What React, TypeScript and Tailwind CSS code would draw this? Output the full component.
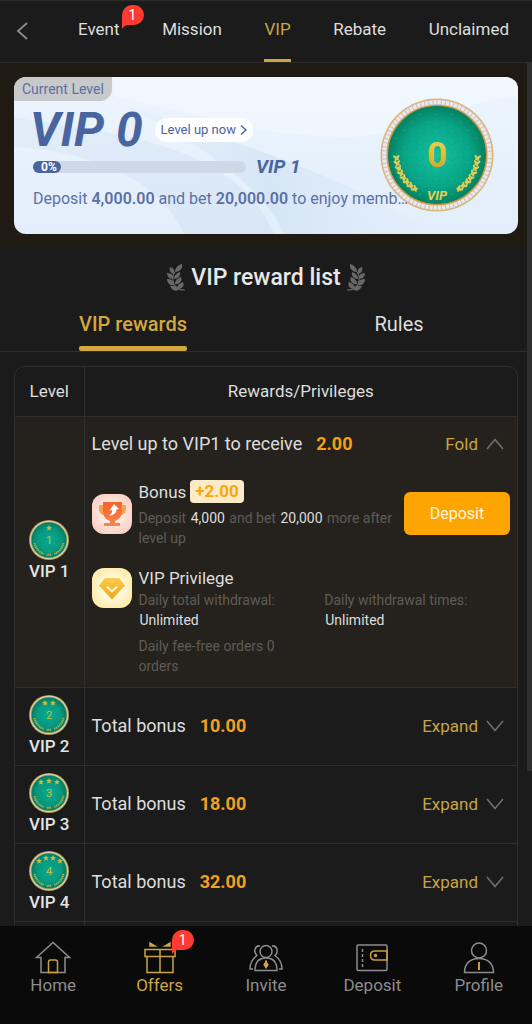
import clsx from "clsx";
import { ReactNode } from "react";

const tabs = ["Event", "Mission", "VIP", "Rebate", "Unclaimed"];

const levels = [
  { level: 2, bonus: "10.00" },
  { level: 3, bonus: "18.00" },
  { level: 4, bonus: "32.00" },
];

const stars: Record<number, [number, number][]> = {
  1: [[20, 8]],
  2: [[16, 8], [24, 8]],
  3: [[12, 9], [20, 8], [28, 9]],
  4: [[10, 10], [17, 7], [24, 7], [31, 10]],
};

function Bubble({ children }: { children: ReactNode }) {
  return (
    <span className="absolute left-full bottom-full h-5 w-[22px] text-center text-sm leading-5 text-white">
      <svg viewBox="0 0 22 24" className="absolute left-0 top-0 h-6 w-[22px]" fill="#fd3b30">
        <path d="M10 0h2a10 10 0 0 1 0 20H5q-3 1-5 4V10A10 10 0 0 1 10 0Z" />
      </svg>
      <span className="relative">{children}</span>
    </span>
  );
}

function Chevron({ up }: { up?: boolean }) {
  return (
    <svg
      viewBox="0 0 18 12"
      className="h-3 w-[18px]"
      fill="none"
      stroke="#6f6f6f"
      strokeWidth="1.6"
    >
      <path d={up ? "M1 11 9 1.5 17 11" : "M1 1 9 10.5 17 1"} />
    </svg>
  );
}

function Medal({ level }: { level: number }) {
  return (
    <svg viewBox="0 0 40 40" className="mx-auto block size-10">
      <defs>
        <radialGradient id={`medal-${level}`}>
          <stop offset="0" stopColor="#08ab91" />
          <stop offset="0.65" stopColor="#07997f" />
          <stop offset="1" stopColor="#057a60" />
        </radialGradient>
      </defs>
      <circle cx="20" cy="20" r="20" fill="#b58f45" />
      <circle cx="20" cy="20" r="19.2" fill="#d8d4bd" />
      <circle cx="20" cy="20" r="17.8" fill={`url(#medal-${level})`} stroke="#8b9a56" strokeWidth="0.6" />
      {stars[level].map(([x, y]) => (
        <path
          key={x}
          transform={`translate(${x} ${y})`}
          d="M0-3 .9-.9 3-.8 1.3.6 1.9 2.8 0 1.5-1.9 2.8-1.3.6-3-.8-.9-.9Z"
          fill="#c9bd4c"
        />
      ))}
      <text x="20" y="23.5" textAnchor="middle" fontSize="11" fontFamily="Roboto, sans-serif" fill="#c3bf3c">
        {level}
      </text>
      <path
        d="M5.5 23A15 15 0 0 0 15 34M34.5 23A15 15 0 0 1 25 34"
        fill="none"
        stroke="#a8b350"
        strokeWidth="2"
        strokeDasharray="1.3 0.6"
      />
      <path d="M17.5 34.8h5" stroke="#a8b350" strokeWidth="2" strokeDasharray="1.2 0.5" />
    </svg>
  );
}

function BigMedal() {
  const leaves = [0, 1, 2, 3, 4, 5, 6, 7];
  const branch = (
    <g fill="#dccb5a">
      {leaves.map((i) => {
        const a = ((172 - i * 7.5) * Math.PI) / 180;
        const x = 57 + 41 * Math.cos(a);
        const y = 57 + 41 * Math.sin(a);
        return (
          <g key={i} transform={`translate(${x} ${y}) rotate(${-i * 7})`}>
            <ellipse cx="-2.2" cy="-2" rx="3.6" ry="1.3" transform="rotate(38)" />
            <ellipse cx="2.6" cy="-1" rx="3.6" ry="1.3" transform="rotate(-55)" />
          </g>
        );
      })}
    </g>
  );
  return (
    <svg viewBox="0 0 114 114" className="absolute right-6 top-[21px] size-[114px]">
      <defs>
        <radialGradient id="emerald">
          <stop offset="0" stopColor="#14c0a2" />
          <stop offset="0.65" stopColor="#08a688" />
          <stop offset="1" stopColor="#04805f" />
        </radialGradient>
        <linearGradient id="gold" x1="0" y1="0" x2="0" y2="1">
          <stop offset="0" stopColor="#f1d84e" />
          <stop offset="1" stopColor="#d39c1c" />
        </linearGradient>
        <pattern id="quilt" width="16" height="16" patternUnits="userSpaceOnUse">
          <path d="M0 8 8 0 16 8 8 16Z" fill="none" stroke="#0b8a72" strokeOpacity="0.25" />
          <circle cx="8" cy="0" r="1" fill="#5fdcc0" fillOpacity="0.35" />
          <circle cx="0" cy="8" r="1" fill="#5fdcc0" fillOpacity="0.35" />
        </pattern>
      </defs>
      <circle cx="57" cy="57" r="56.5" fill="#e0b65c" />
      <circle cx="57" cy="57" r="52.8" fill="none" stroke="#c9bcc0" strokeWidth="5.4" />
      <circle cx="57" cy="57" r="52.8" fill="none" stroke="#efe8e6" strokeWidth="4" strokeDasharray="3.2 0.95" />
      <circle cx="57" cy="57" r="49.5" fill="url(#emerald)" stroke="#c79a3d" strokeWidth="1.2" />
      <circle cx="57" cy="57" r="48" fill="url(#quilt)" />
      {branch}
      <g transform="translate(114 0) scale(-1 1)">{branch}</g>
      <text
        x="57"
        y="69"
        textAnchor="middle"
        fontFamily="Roboto, sans-serif"
        fontWeight="700"
        fontSize="35"
        fill="url(#gold)"
      >
        0
      </text>
      <text
        x="57"
        y="102"
        textAnchor="middle"
        fontFamily="Roboto, sans-serif"
        fontWeight="700"
        fontStyle="italic"
        fontSize="13"
        fill="#e6cf52"
      >
        VIP
      </text>
    </svg>
  );
}

function Laurel({ flip }: { flip?: boolean }) {
  return (
    <svg viewBox="0 0 19 28" className={clsx("h-7 w-[19px]", flip && "-scale-x-100")} fill="#676767">
      <path d="M8 8C4 13 6 20 9 23c3 3 6 3 9 3" fill="none" stroke="#676767" strokeWidth="1.2" />
      <path d="M15 0C16 4 13 8 8 8 8 4 11 1 15 0Z" />
      <path d="M3 3C7 4 8 7 7 10 3 9 2 6 3 3Z" />
      <path d="M13 8C14 12 11 15 7 15 7 11 10 9 13 8Z" />
      <path d="M0 9C5 9 7 12 6 15 2 15 0 12 0 9Z" />
      <path d="M14 13C16 17 12 21 8 20 8 16 11 14 14 13Z" />
      <path d="M0 15C5 15 7 17 7 21 3 22 0 19 0 15Z" />
      <path d="M16 18C18 22 15 25 10 25 10 21 13 19 16 18Z" />
      <path d="M3 22C7 21 10 22 12 25 10 28 5 27 3 22Z" />
    </svg>
  );
}

function TrophyIcon() {
  return (
    <svg viewBox="0 0 40 40" className="size-10 shrink-0">
      <defs>
        <radialGradient id="peach">
          <stop offset="0.4" stopColor="#fff0ea" />
          <stop offset="1" stopColor="#fdd3c7" />
        </radialGradient>
        <linearGradient id="cup" x1="0" y1="0" x2="0" y2="1">
          <stop offset="0" stopColor="#f6632e" />
          <stop offset="1" stopColor="#f98650" />
        </linearGradient>
      </defs>
      <rect width="40" height="40" rx="12" fill="url(#peach)" />
      <path d="M12 11H8q-1 0-1 1v3c0 4 3 6 7 7M28 11h5q1 0 1 1v3c0 4-3 6-7 7" fill="#fba04b" />
      <path d="M11 8h19v9c0 6-4 9-7 10v2h5v3H12v-3h6v-2c-3-1-7-4-7-10Z" fill="url(#cup)" />
      <path d="m22 10 5 5-2.500.5c0 3.500-3 6-7.500 6 2.500-1.500 3.500-3.500 3-5.500l-2.500.5Z" fill="#fff" />
    </svg>
  );
}

function DiamondIcon() {
  return (
    <svg viewBox="0 0 40 40" className="mt-0.5 size-10 shrink-0">
      <defs>
        <radialGradient id="cream">
          <stop offset="0.4" stopColor="#fffbe8" />
          <stop offset="1" stopColor="#fdedb0" />
        </radialGradient>
        <linearGradient id="gem" x1="0" y1="0" x2="0" y2="1">
          <stop offset="0" stopColor="#fbcb51" />
          <stop offset="1" stopColor="#f1a60e" />
        </linearGradient>
      </defs>
      <rect width="40" height="40" rx="12" fill="url(#cream)" />
      <path d="M13 10h14l6 7.5L20 31.5 7 17.5Z" fill="url(#gem)" />
      <path d="m15 18.5 5 5 5-5" fill="none" stroke="#fff6d8" strokeWidth="1.8" />
    </svg>
  );
}

const navItems = [
  {
    label: "Home",
    icon: (
      <>
        <path d="M1.5 16.5 18 1.5l16.5 15H30v15H6v-15Z" />
        <path d="M13.5 31.5V21q0-2 2-2h5q2 0 2 2v10.5Z" stroke="#c9a03d" />
      </>
    ),
  },
  {
    label: "Offers",
    badge: 1,
    icon: (
      <g stroke="#cba546">
        <path d="M3 8.5h30v7H3ZM5 15.5v16h26v-16M18 8.5v23" />
        <path d="M8 2v3h5ZM28 2v3h-5Z" fill="#cba546" />
      </g>
    ),
  },
  {
    label: "Invite",
    icon: (
      <>
        <circle cx="18" cy="10.5" r="6" />
        <path d="M7 29.5c0-8 4-12.5 11-12.5s11 4.5 11 12.5Z" />
        <path d="M12 5c-5-1-7 6-3 9.5-4 3-7 8-7 13.5h3M24 5c5-1 7 6 3 9.5 4 3 7 8 7 13.5h-3" />
        <path d="M18 19.5v2m0 0-1.5 2L18 26l1.5-2.5Z" stroke="#d9a93a" strokeWidth="2" />
      </>
    ),
  },
  {
    label: "Deposit",
    icon: (
      <>
        <rect x="3" y="4" width="30" height="25.5" rx="1" />
        <path d="M8.5 8v18" strokeDasharray="3 2" />
        <path d="M33 10H21q-4.5 0-4.5 4.5T21 19h12Z" stroke="#c9a03d" />
        <circle cx="21.5" cy="14.5" r="1" fill="#c9a03d" stroke="#c9a03d" />
      </>
    ),
  },
  {
    label: "Profile",
    icon: (
      <>
        <circle cx="18" cy="9.5" r="7.5" />
        <path d="M3.5 31.5C3.5 22 10 17.5 18 17.5S32.5 22 32.5 31.5Z" />
        <path d="M18 21v8" stroke="#c9a03d" strokeWidth="2" />
      </>
    ),
  },
];

function Header() {
  return (
    <header className="flex h-[63px] shrink-0 items-stretch border-y border-[#2b2b2b] pl-4 pr-[23px]">
      <button aria-label="Back" className="w-[62px] pb-0.5">
        <svg viewBox="0 0 12 18" className="h-[18px] w-3" fill="none" stroke="#8c8c8c" strokeWidth="1.8">
          <path d="M11 1 2 9l9 8" />
        </svg>
      </button>
      <nav className="flex flex-1 justify-between">
        {tabs.map((tab) => (
          <a
            key={tab}
            href="#"
            className={clsx(
              "flex items-center border-b-3 text-[17px]",
              tab === "VIP" ? "border-[#cba546] text-[#cba546]" : "border-transparent text-[#dedede]"
            )}
          >
            <span className="relative">
              {tab}
              {tab === "Event" && (
                <span className="absolute -right-0.5 top-2">
                  <Bubble>1</Bubble>
                </span>
              )}
            </span>
          </a>
        ))}
      </nav>
    </header>
  );
}

function CurrentLevel() {
  return (
    <section className="bg-[#1f1b12] px-3.5 py-3.5">
      <div className="relative overflow-hidden rounded-xl bg-linear-to-b from-[#edf5fe] to-[#e2eefb] pb-[23px] text-[#48659f]">
        <svg viewBox="0 0 504 157" preserveAspectRatio="none" className="absolute inset-0 size-full">
          <defs>
            <linearGradient id="wave" x1="0" y1="0" x2="1" y2="1">
              <stop offset="0" stopColor="#cfdff1" stopOpacity="0.3" />
              <stop offset="1" stopColor="#cfdff1" stopOpacity="0.5" />
            </linearGradient>
            <linearGradient id="crest" x1="0" y1="0" x2="1" y2="0">
              <stop offset="0" stopColor="#d3e2f4" stopOpacity="0" />
              <stop offset="0.5" stopColor="#cddff2" stopOpacity="0.6" />
              <stop offset="1" stopColor="#d3e2f4" stopOpacity="0" />
            </linearGradient>
          </defs>
          <path d="M0 40C80 55 220 60 260 157H170C150 110 90 75 0 70Z" fill="url(#wave)" />
          <path d="M90 20C200 60 330 95 420 157H270C250 110 180 60 90 20Z" fill="url(#crest)" />
          <path d="M100 20C200 40 250 60 330 60S450 20 504 20V0H100Z" fill="#f5faff" opacity="0.5" />
        </svg>
        <BigMedal />
        <div className="relative">
          <p className="h-6 w-[98px] rounded-br-xl bg-[#c8c9cb] pl-2 text-sm leading-6 text-[#5b70a5]">
            Current Level
          </p>
          <div className="flex items-center gap-3 pl-4">
            <p className="text-[48px] font-bold italic leading-[58px]">VIP 0</p>
            <button className="flex h-6 items-center gap-1 rounded-full bg-white px-1.5 text-[13px]">
              Level up now
              <svg viewBox="0 0 7 10" className="h-2.5 w-[7px]" fill="none" stroke="#48659f" strokeWidth="1.4">
                <path d="m1 .5 5 4.5-5 4.5" />
              </svg>
            </button>
          </div>
          <div className="flex h-4 items-center gap-2.5 pl-[19px]">
            <div className="h-3 w-[213px] rounded-full bg-[#cdd9e6]">
              <div className="h-3 w-7 rounded-full bg-[#48659f] pl-1 text-center text-xs font-bold leading-3 text-white">
                0%
              </div>
            </div>
            <p className="text-[19px] font-bold italic leading-4">VIP 1</p>
          </div>
          <p className="mt-3 truncate pl-[19px] text-base leading-6 text-[#5b70a5]">
            Deposit <b className="font-semibold">4,000.00</b> and bet{" "}
            <b className="font-semibold">20,000.00</b> to enjoy memb…
          </p>
        </div>
      </div>
    </section>
  );
}

function LevelOneDetails() {
  return (
    <div className="px-[7px] pb-[11px] text-sm leading-5 text-[#5f5c57]">
      <div className="flex h-[63px] items-center pb-2 text-lg">
        <p className="text-[#dedede]">Level up to VIP1 to receive</p>
        <b className="pl-3.5 font-bold text-[#f6a012]">2.00</b>
        <button className="ml-auto mr-1.5 flex items-center gap-2 text-[17px] text-[#c9a445]">
          Fold <Chevron up />
        </button>
      </div>
      <div className="flex items-center gap-[7px]">
        <TrophyIcon />
        <div className="min-w-0 flex-1">
          <h3 className="mb-1 flex items-center gap-1 text-[17px] leading-6 text-[#dedede]">
            Bonus
            <span className="rounded bg-[#fdebc8] px-[5px] text-[17px] font-bold leading-[23px] text-[#f8a80c]">
              +2.00
            </span>
          </h3>
          <p>
            Deposit <span className="px-px text-[#dedede]">4,000</span> and bet{" "}
            <span className="px-px text-[#dedede]">20,000</span> more after level up
          </p>
        </div>
        <button className="h-[43px] w-[106px] shrink-0 rounded-md bg-[#ffa502] text-base text-[#fff6dc]">
          Deposit
        </button>
      </div>
      <div className="mt-[18px] flex gap-[7px]">
        <DiamondIcon />
        <div className="flex-1">
          <h3 className="text-[17px] leading-6 text-[#dedede]">VIP Privilege</h3>
          <div className="grid grid-cols-2 gap-y-1.5">
            <p>
              Daily total withdrawal:
              <span className="block pl-px text-[#dedede]">Unlimited</span>
            </p>
            <p>
              Daily withdrawal times:
              <span className="block pl-px text-[#dedede]">Unlimited</span>
            </p>
            <p className="pr-8">Daily fee-free orders 0 orders</p>
          </div>
        </div>
      </div>
    </div>
  );
}

function RewardTable() {
  return (
    <div className="mx-3.5 mt-3.5 overflow-hidden rounded-[10px] border border-[#2e2e2e]">
      <table className="w-full border-collapse text-left">
        <thead>
          <tr className="h-[49px] border-b border-[#2e2e2e] text-center text-[17px] text-[#dedede]">
            <th className="w-[69px] border-r border-[#2e2e2e] font-normal">Level</th>
            <th className="font-normal">Rewards/Privileges</th>
          </tr>
        </thead>
        <tbody>
          <tr className="border-b border-[#2e2e2e] bg-[#25221d]">
            <LevelCell level={1} />
            <td className="p-0">
              <LevelOneDetails />
            </td>
          </tr>
          {levels.map(({ level, bonus }) => (
            <tr key={level} className="border-b border-[#2e2e2e]">
              <LevelCell level={level} />
              <td className="p-0">
                <div className="flex items-center px-[7px] text-lg">
                  <p className="text-[#dedede]">Total bonus</p>
                  <b className="pl-3.5 text-[#f1a120]">{bonus}</b>
                  <button className="ml-auto mr-1.5 flex items-center gap-2 text-[17px] text-[#c9a445]">
                    Expand <Chevron />
                  </button>
                </div>
              </td>
            </tr>
          ))}
          <tr className="h-[78px]">
            <td className="border-r border-[#2e2e2e]" />
            <td />
          </tr>
        </tbody>
      </table>
    </div>
  );
}

function LevelCell({ level }: { level: number }) {
  return (
    <td className="border-r border-[#2e2e2e] px-0 pb-2 pt-[7px] text-center align-middle">
      <Medal level={level} />
      <p className="text-[17px] font-medium leading-[22px] text-[#e4e4e4]">VIP {level}</p>
    </td>
  );
}

function BottomNav() {
  return (
    <nav className="grid h-[98px] shrink-0 grid-cols-5 bg-[#0a0a0a] pt-[15px]">
      {navItems.map(({ label, icon, badge }) => (
        <a
          key={label}
          href="#"
          className={clsx(
            "flex flex-col items-center text-[17px] leading-[22px]",
            badge ? "text-[#cba546]" : "text-[#8d8d8d]"
          )}
        >
          <span className="relative">
            <svg viewBox="0 0 36 33" className="h-[33px] w-9" fill="none" stroke="#8d8d8d" strokeWidth="1.5">
              {icon}
            </svg>
            {badge && (
              <span className="absolute right-1.5 top-[9px]">
                <Bubble>{badge}</Bubble>
              </span>
            )}
          </span>
          {label}
        </a>
      ))}
    </nav>
  );
}

export default function App() {
  return (
    <div className="flex h-screen flex-col bg-[#1b1b1b] font-[Roboto,sans-serif]">
      <Header />
      <div className="relative min-h-0 flex-1">
        <main className="h-full overflow-y-auto [scrollbar-width:none]">
          <CurrentLevel />
          <h1 className="mt-4 flex items-center justify-center gap-[5px] text-[23px] font-medium leading-7 text-[#e8e8e8]">
            <Laurel />
            VIP reward list
            <Laurel flip />
          </h1>
          <div className="mt-4 grid grid-cols-2 justify-items-center border-b border-[#2e2e2e] text-xl text-[#dedede]">
            <button className="relative pb-[11px] font-medium leading-8 text-[#d3a83e]">
              VIP rewards
              <span className="absolute inset-x-0 bottom-0 h-[5px] rounded-xs bg-[#d3a83e]" />
            </button>
            <button className="pb-[11px] leading-8">Rules</button>
          </div>
          <RewardTable />
        </main>
        <div className="absolute right-0 top-0 h-[82%] w-[5px] bg-[#2f2f2f]" />
      </div>
      <BottomNav />
    </div>
  );
}
